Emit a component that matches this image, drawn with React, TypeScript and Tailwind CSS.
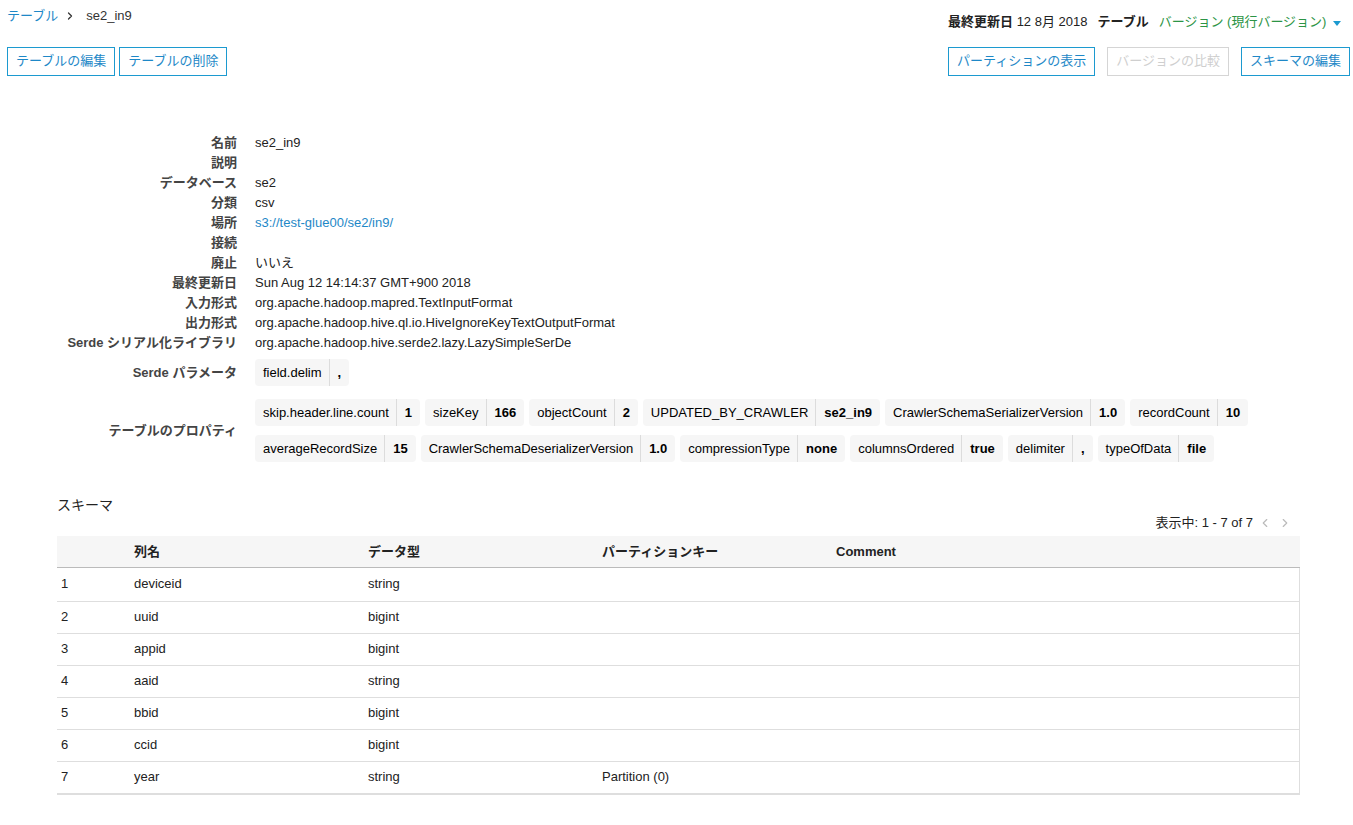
import type { ReactNode } from "react";
import { ChevronLeft, ChevronRight } from "lucide-react";

type Pair = [string, string];

const serdeParameters: Pair[] = [["field.delim", ","]];

const tableProperties: Pair[] = [
  ["skip.header.line.count", "1"],
  ["sizeKey", "166"],
  ["objectCount", "2"],
  ["UPDATED_BY_CRAWLER", "se2_in9"],
  ["CrawlerSchemaSerializerVersion", "1.0"],
  ["recordCount", "10"],
  ["averageRecordSize", "15"],
  ["CrawlerSchemaDeserializerVersion", "1.0"],
  ["compressionType", "none"],
  ["columnsOrdered", "true"],
  ["delimiter", ","],
  ["typeOfData", "file"],
];

const columns = [
  { name: "deviceid", type: "string", key: "" },
  { name: "uuid", type: "bigint", key: "" },
  { name: "appid", type: "bigint", key: "" },
  { name: "aaid", type: "string", key: "" },
  { name: "bbid", type: "bigint", key: "" },
  { name: "ccid", type: "bigint", key: "" },
  { name: "year", type: "string", key: "Partition (0)" },
];

function ActionButton({ children, disabled = false }: { children: ReactNode; disabled?: boolean }) {
  return (
    <button
      type="button"
      disabled={disabled}
      className="h-[29px] border border-[#1c9ad0] px-2 pb-0.5 whitespace-nowrap text-[#1e88c7] disabled:border-[#d5d5d5] disabled:text-[#cfcfcf]"
    >
      {children}
    </button>
  );
}

function Chips({ items }: { items: Pair[] }) {
  return (
    <ul className="flex flex-wrap gap-x-[5px] gap-y-[9px]">
      {items.map(([name, value]) => (
        <li key={name} className="flex h-[27px] items-stretch rounded bg-[#f6f6f6] leading-[27px] text-black">
          <span className="border-r border-[#dcdcdc] pr-[7px] pl-2">{name}</span>
          <span className="px-2 font-bold">{value}</span>
        </li>
      ))}
    </ul>
  );
}

function Detail({ label, children }: { label: string; children?: ReactNode }) {
  return (
    <div className="grid min-h-5 grid-cols-[237px_1fr] items-center gap-x-[18px]">
      <dt className="text-right font-bold text-[#444]">{label}</dt>
      <dd>{children}</dd>
    </div>
  );
}

export default function App() {
  return (
    <main className="min-h-screen bg-white pb-7 font-['Liberation_Sans','Noto_Sans_CJK_JP',sans-serif] text-[13px] leading-5 text-[#222]">
      <header className="flex justify-between gap-6 pr-[3px] pl-[7px]">
        <div className="pt-[6px]">
          <nav aria-label="breadcrumb" className="flex items-center">
            <a href="#tables" className="text-[#1e88c7]">テーブル</a>
            <ChevronRight className="mr-2 ml-1 size-4 p-0.5 text-[#333]" strokeWidth={2.5} />
            <span className="text-[#333]">se2_in9</span>
          </nav>
          <div className="mt-[21px] flex gap-1">
            <ActionButton>テーブルの編集</ActionButton>
            <ActionButton>テーブルの削除</ActionButton>
          </div>
        </div>
        <div className="pt-3">
          <div className="flex items-center gap-[10px] whitespace-nowrap">
            <span>
              <b>最終更新日</b> 12 8月 2018
            </span>
            <b>テーブル</b>
            <button type="button" className="flex items-center gap-[7px] text-[#2c9445]">
              バージョン (現行バージョン)
              <svg viewBox="0 0 8 5" className="mt-0.5 h-[5px] w-2 fill-[#1c9ad0]" aria-hidden="true">
                <path d="M0 0h8L4 5z" />
              </svg>
            </button>
          </div>
          <div className="mt-[15px] flex gap-3">
            <ActionButton>パーティションの表示</ActionButton>
            <ActionButton disabled>バージョンの比較</ActionButton>
            <ActionButton>スキーマの編集</ActionButton>
          </div>
        </div>
      </header>

      <dl className="mt-[57px] pr-[53px]">
        <Detail label="名前">se2_in9</Detail>
        <Detail label="説明" />
        <Detail label="データベース">se2</Detail>
        <Detail label="分類">csv</Detail>
        <Detail label="場所">
          <a href="#location" className="text-[#1e88c7]">s3://test-glue00/se2/in9/</a>
        </Detail>
        <Detail label="接続" />
        <Detail label="廃止">いいえ</Detail>
        <Detail label="最終更新日">Sun Aug 12 14:14:37 GMT+900 2018</Detail>
        <Detail label="入力形式">org.apache.hadoop.mapred.TextInputFormat</Detail>
        <Detail label="出力形式">org.apache.hadoop.hive.ql.io.HiveIgnoreKeyTextOutputFormat</Detail>
        <Detail label="Serde シリアル化ライブラリ">org.apache.hadoop.hive.serde2.lazy.LazySimpleSerDe</Detail>
        <div className="mt-[6px] flex flex-col gap-[13px]">
          <Detail label="Serde パラメータ">
            <Chips items={serdeParameters} />
          </Detail>
          <Detail label="テーブルのプロパティ">
            <Chips items={tableProperties} />
          </Detail>
        </div>
      </dl>

      <section className="mt-[33px] pr-[53px] pl-[57px]">
        <h2 className="text-sm leading-5">スキーマ</h2>
        <div className="-mt-[2px] flex items-center justify-end pr-[7px]">
          <span className="mr-1">表示中: 1 - 7 of 7</span>
          <button type="button" disabled aria-label="前のページ" className="mr-1 text-[#bbb]">
            <ChevronLeft className="size-4 p-px" />
          </button>
          <button type="button" disabled aria-label="次のページ" className="text-[#bbb]">
            <ChevronRight className="size-4 p-px" />
          </button>
        </div>
        <table className="mt-[3px] w-full table-fixed border-separate border-spacing-0 text-left">
          <thead>
            <tr className="h-8 bg-[#f6f6f6] *:border-b *:border-[#bbb] *:px-1">
              <th className="w-[73px]" aria-label="番号" />
              <th>列名</th>
              <th>データ型</th>
              <th>パーティションキー</th>
              <th>Comment</th>
              <th aria-label="余白" />
            </tr>
          </thead>
          <tbody className="[&>tr:first-child]:h-[34px] [&>tr:last-child]:h-[33px] [&>tr:last-child>td]:border-b-2">
            {columns.map((column, index) => (
              <tr key={column.name} className="h-8 *:border-b *:border-[#dedede] *:px-1 *:pb-px">
                <td>{index + 1}</td>
                <td>{column.name}</td>
                <td>{column.type}</td>
                <td>{column.key}</td>
                <td />
                <td className="border-r" />
              </tr>
            ))}
          </tbody>
        </table>
      </section>
    </main>
  );
}
